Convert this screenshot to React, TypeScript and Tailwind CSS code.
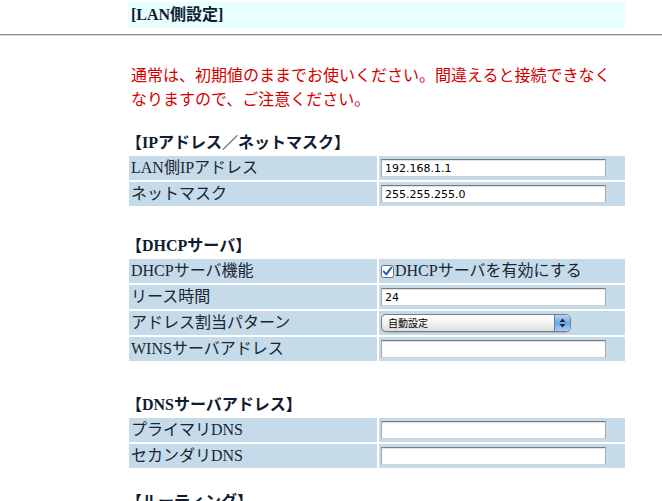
import React from 'react';

const font = "font-['Liberation_Serif','Noto_Sans_CJK_JP',serif]";

const TextBox: React.FC<{ value?: string }> = ({ value = '' }) => (
  <div className="h-[18px] w-[225px] bg-white border border-[#a8a8a8] border-t-[#7a7a7a] border-b-[#d0d0d0] shadow-[inset_0_1px_1px_rgba(0,0,0,0.12)] pl-[3px] flex items-center font-['DejaVu_Sans','Noto_Sans_CJK_JP',sans-serif] text-[11px] text-black leading-none">
    {value}
  </div>
);

const SelectBox: React.FC<{ value: string }> = ({ value }) => (
  <div className="h-[18px] w-[190px] flex items-stretch rounded-[5px] border border-[#7d7d7d] overflow-hidden bg-gradient-to-b from-white via-[#f4f4f4] to-[#dcdcdc] shadow-[0_1px_1px_rgba(0,0,0,0.15)]">
    <div className="flex-1 pl-[6px] flex items-center font-['Noto_Sans_CJK_JP',sans-serif] text-[10px] text-black leading-none">
      {value}
    </div>
    <div className="w-[16px] border-l border-[#5a7fb5] bg-gradient-to-b from-[#b9d6f5] via-[#6fa4e3] to-[#a9cdf5] flex items-center justify-center">
      <svg width="7" height="10" viewBox="0 0 7 10">
        <path d="M3.5 0.5 L6.5 4 H0.5 Z" fill="#1a2a44" />
        <path d="M3.5 9.5 L6.5 6 H0.5 Z" fill="#1a2a44" />
      </svg>
    </div>
  </div>
);

const CheckMark: React.FC = () => (
  <svg width="13" height="13" viewBox="0 0 13 13" className="mr-[1px]">
    <rect x="0.5" y="0.5" width="12" height="12" rx="2" fill="#ffffff" stroke="#6b6b6b" />
    <path d="M2.8 6.6 L5.3 9.4 L10.3 2.6" fill="none" stroke="#1f5fb8" strokeWidth="2" strokeLinecap="round" strokeLinejoin="round" />
  </svg>
);

type Row = { label: string; value: React.ReactNode };

const Section: React.FC<{ title: string; rows: Row[]; className?: string }> = ({ title, rows, className }) => (
  <div className={className}>
    <div className="h-[22px] leading-[22px] font-bold text-[16px] text-[#101c30] -ml-[1px]">{title}</div>
    <table className="w-[500px] border-separate border-spacing-[2px]">
      <tbody>
        {rows.map((r) => (
          <tr key={r.label}>
            <td className="w-[248px] h-[24px] p-0 pl-[2px] bg-[#c6dbe9] text-[16px] text-[#1a2535] leading-[24px] align-middle">
              {r.label}
            </td>
            <td className="h-[24px] p-0 pl-[2px] bg-[#c6dbe9] align-middle">{r.value}</td>
          </tr>
        ))}
      </tbody>
    </table>
  </div>
);

const App: React.FC = () => {
  return (
    <div className={`w-[662px] h-[501px] overflow-hidden bg-white ${font}`}>
      <div className="pt-[2px]">
        <div className="ml-[128px] w-[497px] h-[26px] bg-[#e8ffff] pl-[3px] leading-[26px] font-bold text-[16px] text-[#101c30]">
          [LAN側設定]
        </div>
      </div>
      <div className="mt-[6px] border-t border-[#8e8e8e] border-b border-b-[#dcdcdc]" />

      <div className="ml-[127px] w-[500px]">
        <p className="mt-[28px] pl-[4px] text-[16px] leading-[24px] text-[#d40000]">
          通常は、初期値のままでお使いください。間違えると接続できなく
          <br />
          なりますので、ご注意ください。
        </p>

        <Section
          className="mt-[20px]"
          title="【IPアドレス／ネットマスク】"
          rows={[
            { label: 'LAN側IPアドレス', value: <TextBox value="192.168.1.1" /> },
            { label: 'ネットマスク', value: <TextBox value="255.255.255.0" /> },
          ]}
        />

        <Section
          className="mt-[27px]"
          title="【DHCPサーバ】"
          rows={[
            {
              label: 'DHCPサーバ機能',
              value: (
                <div className="flex items-center text-[16px] leading-[24px] text-[#1a2535]">
                  <CheckMark />
                  DHCPサーバを有効にする
                </div>
              ),
            },
            { label: 'リース時間', value: <TextBox value="24" /> },
            { label: 'アドレス割当パターン', value: <SelectBox value="自動設定" /> },
            { label: 'WINSサーバアドレス', value: <TextBox /> },
          ]}
        />

        <Section
          className="mt-[31px]"
          title="【DNSサーバアドレス】"
          rows={[
            { label: 'プライマリDNS', value: <TextBox /> },
            { label: 'セカンダリDNS', value: <TextBox /> },
          ]}
        />

        <Section
          className="mt-[21px]"
          title="【ルーティング】"
          rows={[{ label: '', value: null }]}
        />
      </div>
    </div>
  );
};

export default App;
